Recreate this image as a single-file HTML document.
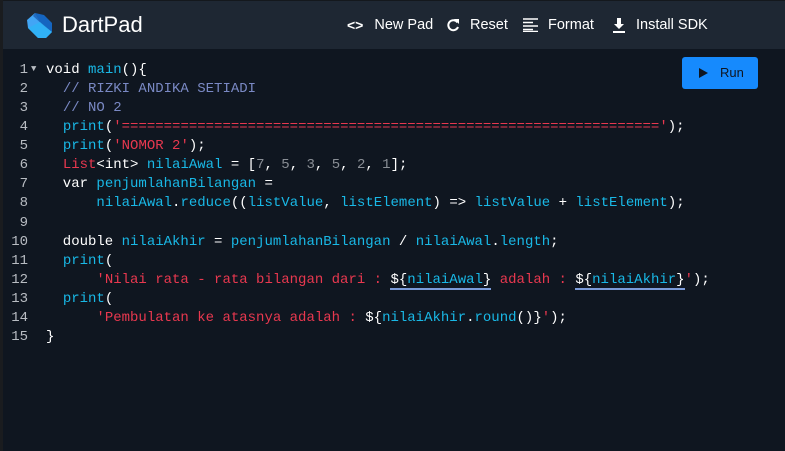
<!DOCTYPE html>
<html><head><meta charset="utf-8"><style>
*{margin:0;padding:0;box-sizing:border-box}
body{width:785px;height:451px;overflow:hidden;background:#0f1620;font-family:"Liberation Sans",sans-serif;position:relative}
.lb{position:absolute;left:0;top:0;width:3px;height:451px;background:#1a1c1f}
.hdr{position:absolute;left:3px;top:0;width:782px;height:49px;background:#1e2733;border-top:1px solid #14181d}
.title{position:absolute;left:59px;top:11px;color:#fff;font-size:22px}
.nav{position:absolute;top:16px;color:#fff;font-size:14.5px;display:flex;align-items:center}
.nav svg{margin-right:10px}
.run{position:absolute;left:682px;top:57px;width:76px;height:32px;background:#168afd;border-radius:3px;color:#0f1620;font-size:13px}
.code{position:absolute;left:0;top:61px;font-family:"Liberation Mono",monospace;font-size:14px;line-height:19.07px;color:#fff;white-space:pre}
.ln{position:absolute;left:0;width:28px;text-align:right;color:#b8bcc2}
.c{color:#7a89c4}.s{color:#e8384f}.i{color:#19b8e6}.n{color:#8a8f96}
.u{border-bottom:2px solid #7a9ad8}
</style></head><body>
<div class="lb"></div>
<div class="hdr">
<svg style="position:absolute;left:24px;top:12px" width="26" height="26" viewBox="0 0 26 26"><polygon points="8,0 17,2 25,10 25,19 13,9" fill="#1565c0"/><polygon points="8,0 13,9 25,19 19,25 11,25 1,15 0,7" fill="#42a5f5"/><polygon points="8,0 13,9 25,19 17,13 6,3" fill="#0d47a1" opacity="0.6"/><polygon points="1,15 11,25 19,25 25,19 13,9" fill="#29b6f6" opacity="0.7"/></svg>
<div class="title">DartPad</div>
<div class="nav" style="left:344px"><span style="font-weight:bold;margin-right:11px;font-size:14px">&lt;&gt;</span>New Pad</div>
<div class="nav" style="left:443px"><svg width="14" height="14" viewBox="0 0 14 14"><path d="M11.5 4.5A5 5 0 1 0 12 9" fill="none" stroke="#fff" stroke-width="2"/><polygon points="8,1 13,1 13,6" fill="#fff"/></svg>Reset</div>
<div class="nav" style="left:520px"><svg width="15" height="14" viewBox="0 0 15 14"><path d="M0 1h15M0 4.5h10M0 8h15M0 11.5h10M0 13.5h15" stroke="#fff" stroke-width="1.6"/></svg>Format</div>
<div class="nav" style="left:609px"><svg width="14" height="15" viewBox="0 0 14 15"><path d="M5 0h4v6h3l-5 5-5-5h3z M1 13h12v2H1z" fill="#fff"/></svg>Install SDK</div>
</div>
<div class="run"><svg style="position:absolute;left:17px;top:11px" width="9" height="10"><polygon points="0,0 9,5 0,10" fill="#0f1620"/></svg><span style="position:absolute;left:38px;top:8px">Run</span></div>
<div class="code">
<div class="ln" style="top:0">1</div><div class="ln" style="top:19.07px">2</div><div class="ln" style="top:38.14px">3</div><div class="ln" style="top:57.21px">4</div><div class="ln" style="top:76.28px">5</div><div class="ln" style="top:95.35px">6</div><div class="ln" style="top:114.42px">7</div><div class="ln" style="top:133.49px">8</div><div class="ln" style="top:152.56px">9</div><div class="ln" style="top:171.63px">10</div><div class="ln" style="top:190.7px">11</div><div class="ln" style="top:209.77px">12</div><div class="ln" style="top:228.84px">13</div><div class="ln" style="top:247.91px">14</div><div class="ln" style="top:266.98px">15</div>
<div style="position:absolute;left:31px;top:-1px;color:#b8bcc2;font-size:9px">▼</div>
<div style="position:absolute;left:46px;top:0">void <span class="i">main</span>(){
  <span class="c">// RIZKI ANDIKA SETIADI</span>
  <span class="c">// NO 2</span>
  <span class="i">print</span>(<span class="s">'================================================================'</span>);
  <span class="i">print</span>(<span class="s">'NOMOR 2'</span>);
  <span class="s">List</span>&lt;int&gt; <span class="i">nilaiAwal</span> = [<span class="n">7</span>, <span class="n">5</span>, <span class="n">3</span>, <span class="n">5</span>, <span class="n">2</span>, <span class="n">1</span>];
  var <span class="i">penjumlahanBilangan</span> =
      <span class="i">nilaiAwal</span>.<span class="i">reduce</span>((<span class="i">listValue</span>, <span class="i">listElement</span>) =&gt; <span class="i">listValue</span> + <span class="i">listElement</span>);

  double <span class="i">nilaiAkhir</span> = <span class="i">penjumlahanBilangan</span> / <span class="i">nilaiAwal</span>.<span class="i">length</span>;
  <span class="i">print</span>(
      <span class="s">'Nilai rata - rata bilangan dari : </span><span class="u">${<span class="i">nilaiAwal</span>}</span><span class="s"> adalah : </span><span class="u">${<span class="i">nilaiAkhir</span>}</span><span class="s">'</span>);
  <span class="i">print</span>(
      <span class="s">'Pembulatan ke atasnya adalah : </span>${<span class="i">nilaiAkhir</span>.<span class="i">round</span>()}<span class="s">'</span>);
}</div>
</div>
</body></html>
